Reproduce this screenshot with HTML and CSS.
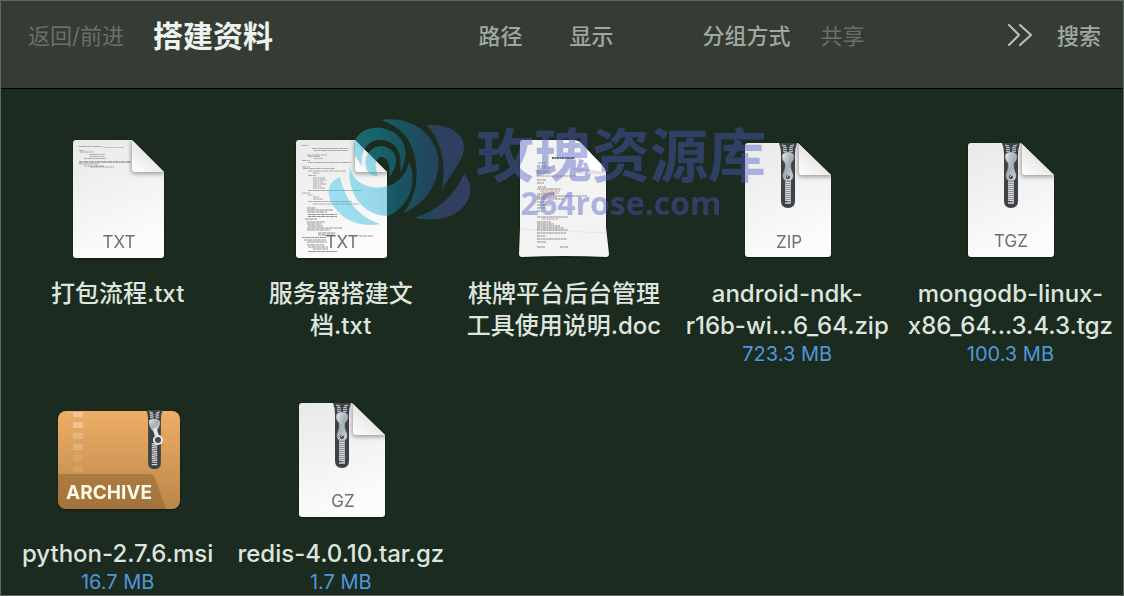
FILE: index.html
```
<!DOCTYPE html>
<html lang="zh-CN">
<head>
    <meta charset="UTF-8">
    <meta name="viewport" content="width=device-width, initial-scale=1.0">
    <title>搭建资料</title>
    <link rel="stylesheet" href="styles.css">
</head>
<body>
    <!-- Shared icon parts -->
    <svg class="defs" width="0" height="0" aria-hidden="true">
        <defs>
            <linearGradient id="paper" x1="0" y1="0" x2="0.3" y2="1">
                <stop offset="0" stop-color="#e9e9e9"/>
                <stop offset="0.6" stop-color="#f4f4f4"/>
                <stop offset="1" stop-color="#fcfcfc"/>
            </linearGradient>
            <linearGradient id="fold" x1="0" y1="1" x2="0.6" y2="0.3">
                <stop offset="0" stop-color="#ffffff"/>
                <stop offset="1" stop-color="#e2e2e2"/>
            </linearGradient>
            <linearGradient id="metal" x1="0" y1="0" x2="1" y2="1">
                <stop offset="0" stop-color="#e4eaec"/>
                <stop offset="0.5" stop-color="#a3b0b5"/>
                <stop offset="1" stop-color="#d3dcdf"/>
            </linearGradient>
            <linearGradient id="box" x1="0" y1="0" x2="0" y2="1">
                <stop offset="0" stop-color="#eeae66"/>
                <stop offset="1" stop-color="#b9874a"/>
            </linearGradient>
            <linearGradient id="rose" gradientUnits="userSpaceOnUse" x1="0" y1="0" x2="146" y2="0">
                <stop offset="0" stop-color="#2cc8ee"/>
                <stop offset="0.35" stop-color="#16b0d8"/>
                <stop offset="0.5" stop-color="#1490b8"/>
                <stop offset="0.7" stop-color="#2870b4"/>
                <stop offset="0.8" stop-color="#4a5cb8"/>
                <stop offset="1" stop-color="#4d5cc0"/>
            </linearGradient>
            <filter id="soft" x="-30%" y="-30%" width="160%" height="160%">
                <feGaussianBlur stdDeviation="2"/>
            </filter>
            <clipPath id="page-clip">
                <path d="M22 8H78L110 40V123Q110 126 107 126H22Q19 126 19 123V11Q19 8 22 8Z"/>
            </clipPath>
            <clipPath id="zip-clip">
                <path d="M25 11H75L108 43V122Q108 125 105 125H25Q22 125 22 122V14Q22 11 25 11Z"/>
            </clipPath>
        </defs>
        <symbol id="text-page" viewBox="0 0 128 128">
            <path fill="url(#paper)" d="M22 8H78L110 40V123Q110 126 107 126H22Q19 126 19 123V11Q19 8 22 8Z"/>
            <g clip-path="url(#page-clip)">
                <path fill="#000" fill-opacity="0.35" filter="url(#soft)" d="M77 6V38Q77 42 81 42H112L110 38Z"/>
            </g>
            <path fill="url(#fold)" d="M78 8V37Q78 40 81 40H110Z"/>
        </symbol>
        <symbol id="zipper" viewBox="0 0 18 66">
            <path fill="#3e4146" d="M0 0H18Q16 5 16 12V58Q16 65 9 65Q2 65 2 58V12Q2 5 0 0Z"/>
            <path fill="none" stroke="#c9cdcf" stroke-width="1.2" d="M3 2l4 1M4 4l4 1M4 6l4 1M4 8l4 1M15 2l-4 1M14 4l-4 1M14 6l-4 1M14 8l-4 1"/>
            <path fill="none" stroke="#d4d8da" stroke-width="1.3" d="M6 37l6 1M6 39l6 1M6 41l6 1M6 43l6 1M6 45l6 1M6 47l6 1M6 49l6 1M6 51l6 1M6 53l6 1M6 55l6 1M6 57l6 1M6 60h6"/>
        </symbol>
        <symbol id="zip-page" viewBox="0 0 128 128">
            <path fill="url(#paper)" d="M25 11H75L108 43V122Q108 125 105 125H25Q22 125 22 122V14Q22 11 25 11Z"/>
            <g clip-path="url(#zip-clip)">
                <path fill="#000" fill-opacity="0.35" filter="url(#soft)" d="M75 9V41Q75 45 79 45H110L108 41Z"/>
            </g>
            <use href="#zipper" x="56" y="11" width="18" height="66"/>
            <path fill="url(#fold)" d="M76 12V40Q76 43 79 43H108Z"/>
            <path fill="url(#metal)" stroke="#7f898d" stroke-width="0.5" d="M65 20Q71 20 71 25Q71 28 68 31Q67 36 70 42Q71 49 65 49Q59 49 60 42Q63 36 62 31Q59 28 59 25Q59 20 65 20Z"/>
            <circle cx="65" cy="45" r="2" fill="#43494c"/>
            <path stroke="#d9dfe1" stroke-width="1" d="M64 45l2-2"/>
        </symbol>
    </svg>

    <header class="toolbar">
        <button class="tool muted" disabled>返回/前进</button>
        <h1>搭建资料</h1>
        <div class="tools">
            <button class="tool">路径</button>
            <button class="tool">显示</button>
            <button class="tool group-by">分组方式</button>
            <button class="tool muted" disabled>共享</button>
        </div>
        <button class="tool more" aria-label="更多">
            <svg width="26" height="24" viewBox="0 0 26 24" fill="none" stroke="#b9c1b9" stroke-width="2" stroke-linecap="round" stroke-linejoin="round">
                <path d="M2 1L12 11L2 21M13 1L24 11L13 21"/>
            </svg>
        </button>
        <button class="tool">搜索</button>
    </header>

    <main>
        <ul class="files">
            <li class="file">
                <svg class="icon" viewBox="0 0 128 128" aria-hidden="true">
                    <use href="#text-page"/>
                    <path fill="none" stroke="#aaa" stroke-width="1.2" stroke-dasharray="3 .5 5 .4 2 .6" d="M25 14.500h24M25 18.500h5M26 20h14M35 22.500h16M36 24.500h15M30 26.500h22M25 32h19M30 34h20M36 35h24"/>
                    <path stroke="#aaa" stroke-width="0.6" d="M49 15.500h21"/>
                    <path stroke="#666" stroke-width="1" stroke-dasharray="3 .6 2 .4" d="M25 30h52"/>
                    <text class="kind" x="65" y="116">TXT</text>
                </svg>
                <a class="name" href="#">打包流程.txt</a>
            </li>
            <li class="file">
                <svg class="icon" viewBox="0 0 128 128" aria-hidden="true">
                    <use href="#text-page"/>
                    <path fill="none" stroke="#999" stroke-width="0.800" stroke-dasharray="4 .5 2 .4 6 .6" d="M25 13.500h6M35 16.500h36M37 18.500h34M30 23h20M31 24.500h12M37 26.500h9M25 28.500h8M31 30.500h43M25 35h8M26 36.500h32M31 39h38M36 41h6M31 43.500h8M36 46h12M36 48h14M36 50h10M36 52h13M36 54h8M36 56h12M31 58.500h54M25 61h8M31 63h5M36 65h6M36 67h10M31 69.500h44M36 72h46"/>
                    <path fill="none" stroke="#888" stroke-width="0.900" stroke-dasharray="3 .4 5 .6" d="M30 76h9M30 78h26M30 80h20M31 82.500h29M31 84.500h29M28 87h12M30 90h18M30 92h14M31 94h15M30 96h35M30 98h23M41 101h18M41 103h16M25 105.500h24M82 104h14M27 108h22M30 110h20M30 113h18M31 115h20M36 117h15M31 119.500h29"/>
                    <text class="kind" x="65" y="116">TXT</text>
                </svg>
                <a class="name" href="#">服务器搭建文<br>档.txt</a>
            </li>
            <li class="file">
                <svg class="icon" viewBox="0 0 128 128" aria-hidden="true">
                    <path fill="#f3f3f3" d="M22 8H74Q78 8 81 11L100 31Q105 36 106 41V95L109 122Q109 125 106 125Q65 123 22 125Q19 125 19 122L20 96V11Q20 8 22 8Z"/>
                    <path fill="#fff" d="M78 9L83 36L106 40Q105 36 100 31L81 11Z"/>
                    <path fill="#d9d9d9" fill-opacity="0.6" d="M72 35L83 37L106 40V42H76Z"/>
                    <path stroke="#ddd" stroke-width="0.6" d="M20 97L106 101"/>
                    <path stroke="#666" stroke-width="1.800" stroke-dasharray="2 .5" d="M52 26h23"/>
                    <path fill="none" stroke="#8a8a8a" stroke-width="1" stroke-dasharray="3 .5 2 .4" d="M38 31h8M37 34h10M37 36h13M37 39h12M37 41h14M37 48h9M37 51h7M38 55h8M37 57h24M37 62h18M37 64h50M37 67h27M37 70h7M37 73h13M37 76h9M37 79h5M37 85h31M37 90h14M37 92h17M37 94h23M37 96h27M37 98h31M37 101h29M37 104h8M37 107h30M37 110h9M37 115h8M60 115h8"/>
                    <path fill="none" stroke="#d09a9a" stroke-width="1" stroke-dasharray="4 .5" d="M37 44h38M40 59h20M42 61h17M37 65.500h20M42 87h16"/>
                </svg>
                <a class="name" href="#">棋牌平台后台管理<br>工具使用说明.doc</a>
            </li>
            <li class="file">
                <svg class="icon" viewBox="0 0 128 128" aria-hidden="true">
                    <use href="#zip-page"/>
                    <text class="kind" x="66" y="116">ZIP</text>
                </svg>
                <a class="name" href="#">android-ndk-<br>r16b-wi...6_64.zip</a>
                <span class="size">723.3 MB</span>
            </li>
            <li class="file">
                <svg class="icon" viewBox="0 0 128 128" aria-hidden="true">
                    <use href="#zip-page"/>
                    <text class="kind" x="65" y="115">TGZ</text>
                </svg>
                <a class="name" href="#">mongodb-linux-<br>x86_64...3.4.3.tgz</a>
                <span class="size">100.3 MB</span>
            </li>
            <li class="file">
                <svg class="icon" viewBox="0 0 128 128" aria-hidden="true">
                    <rect x="4" y="19" width="122" height="98" rx="8" fill="url(#box)"/>
                    <path fill="#7c5426" fill-opacity="0.4" d="M4 82H95Q99 82 101 86L112 117H12Q4 117 4 109Z"/>
                    <path fill="#fff" fill-opacity="0.3" d="M19 20h10v5h-10zM19 30h10v6h-10z"/>
                    <path fill="#fff" fill-opacity="0.2" d="M19 41h10v6h-10zM19 52h10v6h-10z"/>
                    <path fill="#fff" fill-opacity="0.1" d="M19 63h10v6h-10zM19 74h10v6h-10z"/>
                    <use href="#zipper" x="92" y="18" width="17" height="60"/>
                    <path fill="url(#metal)" d="M95 29Q95 27 100 27Q106 27 106 30Q106 36 102 39H99Q95 36 95 29Z"/>
                    <path stroke="#dfe6e8" stroke-width="4" stroke-linecap="round" d="M101 38L103 44"/>
                    <circle cx="104" cy="48" r="4" fill="#4b4741" stroke="#e6ecee" stroke-width="2"/>
                    <text class="archive-label" x="12" y="107">ARCHIVE</text>
                </svg>
                <a class="name" href="#">python-2.7.6.msi</a>
                <span class="size">16.7 MB</span>
            </li>
            <li class="file">
                <svg class="icon" viewBox="0 0 128 128" aria-hidden="true">
                    <use href="#zip-page"/>
                    <text class="kind" x="66" y="115">GZ</text>
                </svg>
                <a class="name" href="#">redis-4.0.10.tar.gz</a>
                <span class="size">1.7 MB</span>
            </li>
        </ul>

        <!-- Site watermark, lies over the icons -->
        <div class="watermark">
            <svg width="150" height="120" viewBox="0 0 150 120" fill="url(#rose)" aria-hidden="true">
                <path d="M101 13C122 12 138 20 138 36C137 50 124 62 116 78C120 54 117 32 101 13Z"/>
                <path d="M138 62C148 72 146 88 134 98C122 108 104 109 88 106C112 99 128 84 138 62Z"/>
                <path d="M55 8C82 4 104 18 111 40C118 66 100 92 78 101C90 84 93 64 89 46C85 26 74 14 55 8Z"/>
                <path d="M29 44C24 22 40 14 56 16C78 20 86 40 74 60C77 44 71 29 56 28C42 27 34 38 36 54Z"/>
                <path d="M41 58C36 44 45 34 56 34C70 36 76 50 63 65C65 54 62 46 56 45C49 45 48 53 52 64C46 64 43 62 41 58Z"/>
                <path d="M24 54C26 70 42 78 58 75C72 72 80 63 83 50C92 70 84 94 62 104C38 104 20 82 24 54Z"/>
                <path d="M14 65C0 70 0 84 8 95C20 112 40 115 54 112C36 106 20 92 14 65Z"/>
            </svg>
            <div class="watermark-text">
                <span class="watermark-title">玫瑰资源库</span>
                <span class="watermark-url">264rose.com</span>
            </div>
        </div>
    </main>
</body>
</html>
```
FILE: styles.css
```
* {
    box-sizing: border-box;
}

body {
    margin: 0;
    min-height: 100vh;
    background-color: #1c2b1f;
    border: 1px solid #5f6b62;
    font-family: Inter, "Noto Sans CJK SC", sans-serif;
    color: #dde5de;
}

.defs {
    position: absolute;
}

/* Toolbar */
.toolbar {
    display: flex;
    align-items: flex-start;
    height: 88px;
    padding: 19px 22px 0 27px;
    background-color: #343c34;
    border-bottom: 1px solid #000;
}

.toolbar h1 {
    margin: 0 0 0 29px;
    font-size: 30px;
    line-height: 32px;
    font-weight: bold;
    color: #eef2ee;
}

.tool {
    padding: 0;
    background: none;
    border: none;
    font-family: inherit;
    font-size: 22px;
    font-weight: 500;
    line-height: 32px;
    color: #a0a8a0;
    white-space: nowrap;
    cursor: pointer;
}

.tool.muted {
    font-weight: 400;
    color: #687069;
    cursor: default;
}

.tools {
    display: flex;
    gap: 30px;
    flex-shrink: 0;
    margin: 0 auto;
    padding-left: 63px;
}

.tools .tool + .tool {
    margin-left: 17px;
}

.tools .tool.group-by {
    margin-left: 59px;
}

.tools .tool.muted {
    margin-left: 0;
}

.more {
    display: flex;
    align-items: center;
    height: 32px;
    margin-right: 24px;
}

/* Files */
main {
    position: relative;
}

.files {
    display: grid;
    grid-template-columns: repeat(5, 1fr);
    row-gap: 25px;
    margin: 0;
    padding: 43px 1px 0 5px;
    list-style: none;
}

.file {
    display: flex;
    flex-direction: column;
    align-items: center;
    text-align: center;
}

.icon {
    width: 128px;
    height: 128px;
    margin-bottom: 18px;
    filter: drop-shadow(0 1px 1px rgba(0, 0, 0, 0.4));
}

.kind {
    font-size: 17px;
    fill: #6f6f6f;
    text-anchor: middle;
}

.archive-label {
    font-size: 19px;
    font-weight: bold;
    fill: #fffbe9;
}

.name {
    font-size: 24px;
    font-weight: 500;
    line-height: 32px;
    color: inherit;
    text-decoration: none;
    white-space: nowrap;
}

.size {
    font-size: 20px;
    line-height: 25px;
    color: #4f97da;
}

/* Watermark */
.watermark {
    position: absolute;
    top: 23px;
    left: 325px;
    display: flex;
    opacity: 0.42;
    pointer-events: none;
}

.watermark-text {
    display: flex;
    flex-direction: column;
    align-items: center;
    color: #4d5cc3;
    font-weight: bold;
}

.watermark-title {
    font-size: 58px;
    line-height: 60px;
    padding-top: 14px;
}

.watermark-url {
    font-family: "Open Sans", sans-serif;
    font-size: 32px;
    line-height: 34px;
}
```
